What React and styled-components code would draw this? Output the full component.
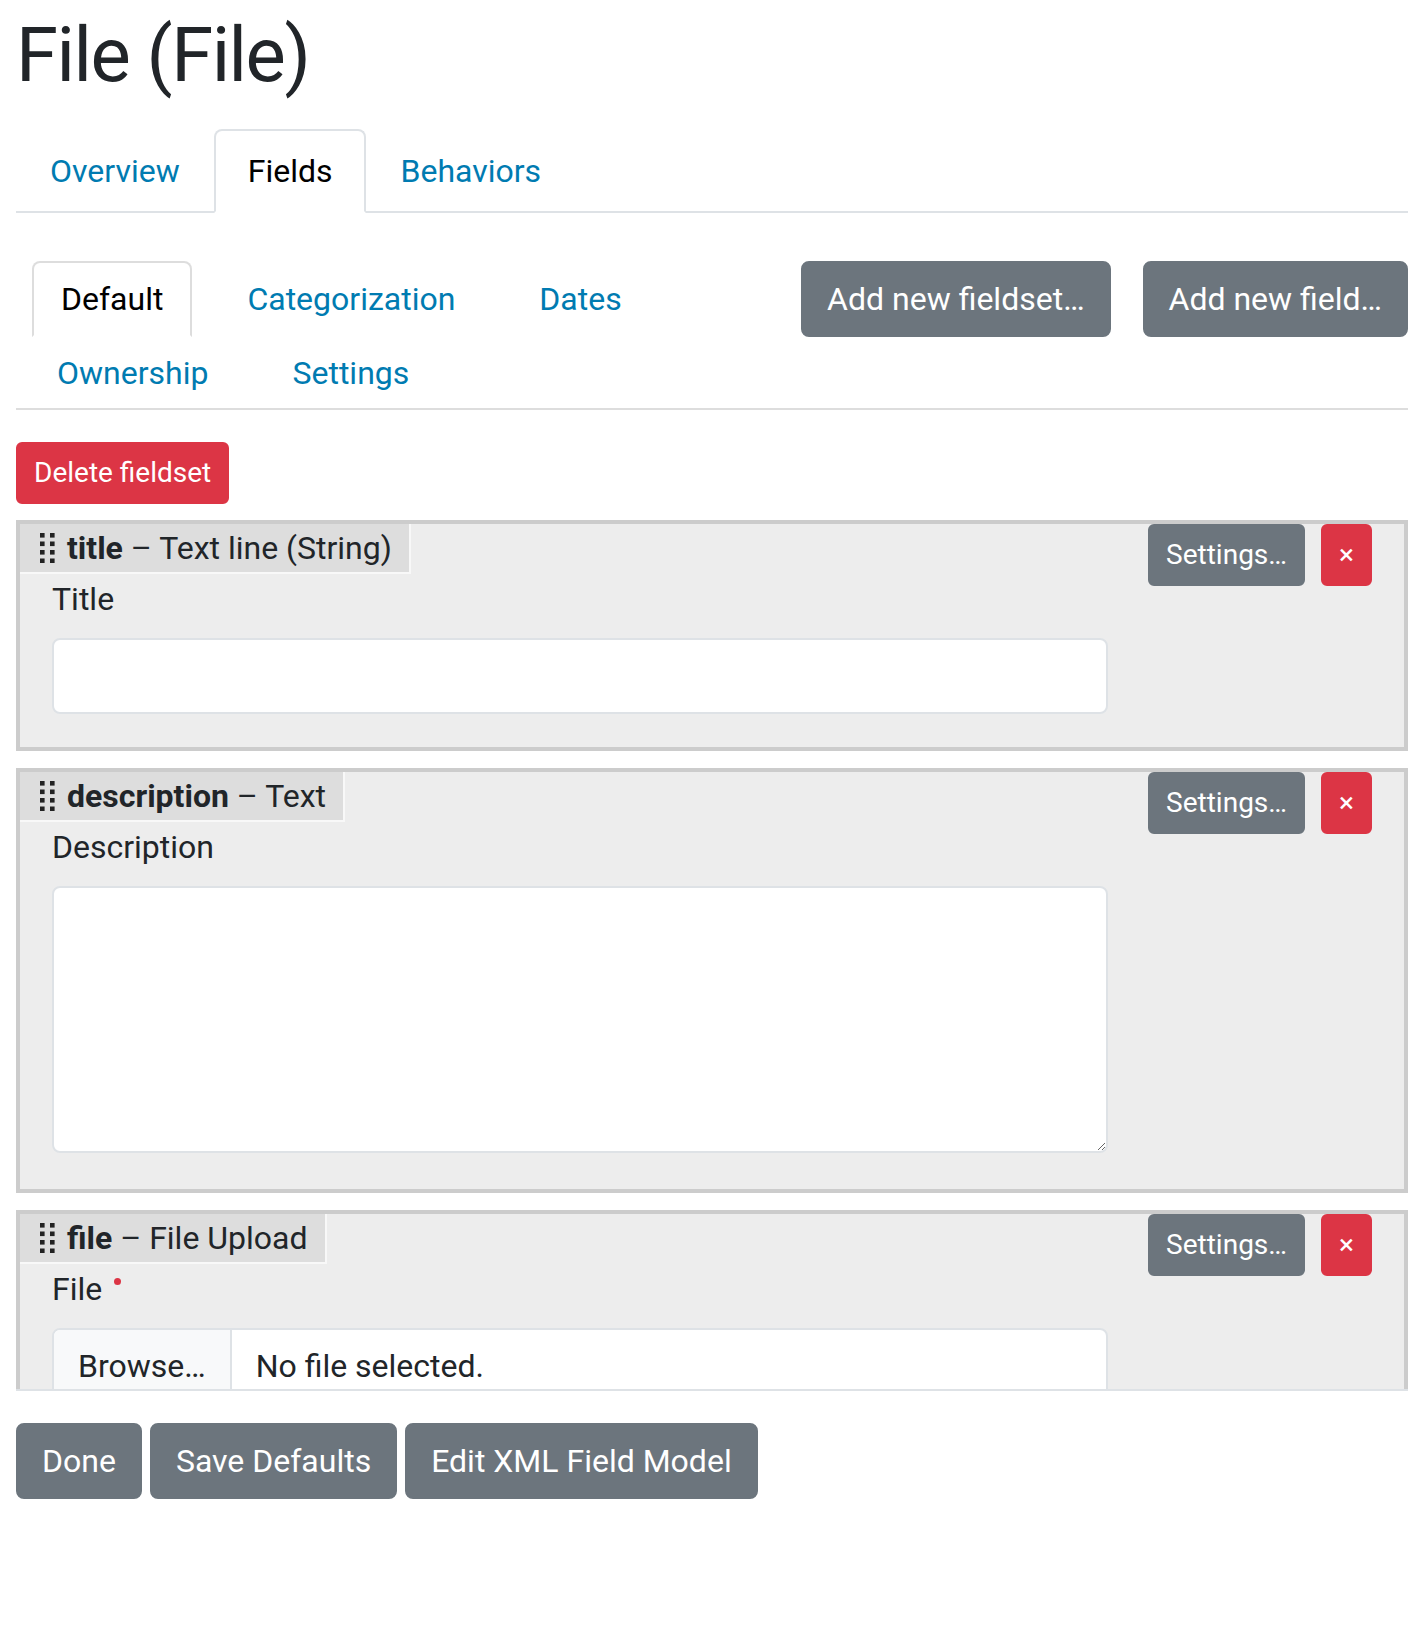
import React from 'react';
import styled, { createGlobalStyle } from 'styled-components';

const GlobalStyle = createGlobalStyle`
  html, body {
    margin: 0;
    padding: 0;
    background: #fff;
  }
  body {
    font-family: Roboto, "Liberation Sans", sans-serif;
    font-size: 32px;
    line-height: 1.5;
    color: #212529;
  }
  *, *::before, *::after {
    box-sizing: border-box;
  }
`;

const Page = styled.div`
  padding: 10px 10px 40px 16px;
`;

const Title = styled.h1`
  margin: 0 0 28px;
  font-size: 76px;
  font-weight: 400;
  line-height: 1.2;
  letter-spacing: -1.5px;
  color: #212529;
`;

const TopTabs = styled.ul`
  display: flex;
  margin: 0;
  padding: 0;
  list-style: none;
  border-bottom: 2px solid #dee2e6;
`;

const TopTab = styled.li`
  margin-bottom: -2px;
  padding: 16px 32px;
  border: 2px solid transparent;
  border-radius: 8px 8px 0 0;
  color: ${(p) => (p.$active ? '#000' : '#007bb1')};
  background: ${(p) => (p.$active ? '#fff' : 'transparent')};
  border-color: ${(p) => (p.$active ? '#dee2e6 #dee2e6 #fff' : 'transparent')};
  cursor: pointer;
`;

const SubNav = styled.div`
  display: flex;
  align-items: flex-start;
  margin-top: 48px;
  border-bottom: 2px solid #dddddd;
`;

const SubTabs = styled.ul`
  display: flex;
  flex-wrap: wrap;
  align-content: flex-start;
  column-gap: 26px;
  flex: 1;
  margin: 0 0 -1px;
  padding: 0 0 0 12px;
  list-style: none;
`;

const SubTab = styled.li`
  margin-bottom: -2px;
  padding: 12px 27px;
  border: 2px solid transparent;
  border-radius: 8px 8px 0 0;
  color: ${(p) => (p.$active ? '#000' : '#007bb1')};
  border-color: ${(p) => (p.$active ? '#dddddd #dddddd transparent' : 'transparent')};
  background: ${(p) => (p.$active ? '#fff' : 'transparent')};
  cursor: pointer;

  &:first-child {
    margin-left: 4px;
  }
`;

const ButtonGroup = styled.div`
  display: flex;
  gap: ${(p) => p.$gap || 8}px;
  margin-left: ${(p) => p.$offset || 0}px;
  margin-top: ${(p) => p.$top || 0}px;
`;

const Button = styled.button`
  font-family: inherit;
  font-size: ${(p) => (p.$small ? 28 : 32)}px;
  line-height: 1.5;
  padding: ${(p) => (p.$small ? '8px 16px' : '12px 24px')};
  border: 2px solid ${(p) => (p.$danger ? '#dc3545' : '#6c757d')};
  border-radius: ${(p) => (p.$small ? 6 : 8)}px;
  background: ${(p) => (p.$danger ? '#dc3545' : '#6c757d')};
  color: #fff;
  white-space: nowrap;
  cursor: pointer;
`;

const DeleteRow = styled.div`
  margin-top: 32px;
`;

const FieldList = styled.div`
  height: 871px;
  margin-top: 16px;
  overflow: hidden;
  border-bottom: 2px solid #dee2e6;
`;

const FieldBox = styled.div`
  position: relative;
  margin-bottom: 17px;
  padding-bottom: 33px;
  border: 4px solid #cccccc;
  background: #ededed;
`;

const FieldHeader = styled.div`
  display: inline-flex;
  align-items: center;
  gap: 12px;
  height: 50px;
  padding: 0 17px 0 20px;
  background: #dddddd;
  border-right: 2px solid #f8f8f8;
  border-bottom: 2px solid #f8f8f8;
  color: #212529;
  white-space: nowrap;
`;

const FieldName = styled.b`
  font-weight: 700;
`;

const FieldActions = styled.div`
  position: absolute;
  top: 0;
  right: 32px;
  display: flex;
  gap: 16px;
`;

const FieldBody = styled.div`
  padding: 0 296px 0 32px;
`;

const Label = styled.label`
  display: block;
  margin-bottom: 16px;
  line-height: 46px;
`;

const Required = styled.span`
  display: inline-block;
  width: 7px;
  height: 7px;
  margin-left: 12px;
  border-radius: 50%;
  background: #dc3545;
  vertical-align: 15px;
`;

const TextInput = styled.input`
  display: block;
  width: 100%;
  height: 76px;
  padding: 0 24px;
  border: 2px solid #dee2e6;
  border-radius: 8px;
  background: #fff;
  font: inherit;
  outline: none;
`;

const TextArea = styled.textarea`
  display: block;
  width: 100%;
  height: 267px;
  margin-bottom: 3px;
  padding: 12px 24px;
  border: 2px solid #dee2e6;
  border-radius: 8px;
  background: #fff;
  font: inherit;
  resize: vertical;
  outline: none;
`;

const FilePicker = styled.div`
  display: flex;
  height: 76px;
  border: 2px solid #dee2e6;
  border-radius: 8px;
  background: #fff;
  overflow: hidden;
`;

const FileButton = styled.span`
  display: flex;
  align-items: center;
  padding: 0 24px;
  background: #f8f9fa;
  border-right: 2px solid #dee2e6;
`;

const FileName = styled.span`
  display: flex;
  align-items: center;
  padding: 0 24px;
`;

const Grip = () => (
  <svg width="15" height="30" viewBox="0 0 15 30" aria-hidden="true">
    {[0, 8.5, 17, 25.5].map((y) =>
      [0, 10].map((x) => <rect key={`${x}-${y}`} x={x} y={y} width="4.6" height="4.6" fill="#222" />)
    )}
  </svg>
);

const Field = ({ name, type, label, required, children }) => (
  <FieldBox>
    <FieldHeader>
      <Grip />
      <span>
        <FieldName>{name}</FieldName> – {type}
      </span>
    </FieldHeader>
    <FieldActions>
      <Button $small>Settings…</Button>
      <Button $small $danger>×</Button>
    </FieldActions>
    <FieldBody>
      <Label>
        {label}
        {required && <Required />}
      </Label>
      {children}
    </FieldBody>
  </FieldBox>
);

const topTabs = ['Overview', 'Fields', 'Behaviors'];
const subTabs = ['Default', 'Categorization', 'Dates', 'Ownership', 'Settings'];

export default function App() {
  return (
    <Page>
      <GlobalStyle />
      <Title>File (File)</Title>

      <TopTabs>
        {topTabs.map((t) => (
          <TopTab key={t} $active={t === 'Fields'}>{t}</TopTab>
        ))}
      </TopTabs>

      <SubNav>
        <SubTabs>
          {subTabs.map((t) => (
            <SubTab key={t} $active={t === 'Default'}>{t}</SubTab>
          ))}
        </SubTabs>
        <ButtonGroup $gap={32} $offset={32}>
          <Button>Add new fieldset…</Button>
          <Button>Add new field…</Button>
        </ButtonGroup>
      </SubNav>

      <DeleteRow>
        <Button $small $danger>Delete fieldset</Button>
      </DeleteRow>

      <FieldList>
        <Field name="title" type="Text line (String)" label="Title">
          <TextInput type="text" />
        </Field>
        <Field name="description" type="Text" label="Description">
          <TextArea />
        </Field>
        <Field name="file" type="File Upload" label="File" required>
          <FilePicker>
            <FileButton>Browse…</FileButton>
            <FileName>No file selected.</FileName>
          </FilePicker>
        </Field>
      </FieldList>

      <ButtonGroup $gap={8} $top={32}>
        <Button>Done</Button>
        <Button>Save Defaults</Button>
        <Button>Edit XML Field Model</Button>
      </ButtonGroup>
    </Page>
  );
}
